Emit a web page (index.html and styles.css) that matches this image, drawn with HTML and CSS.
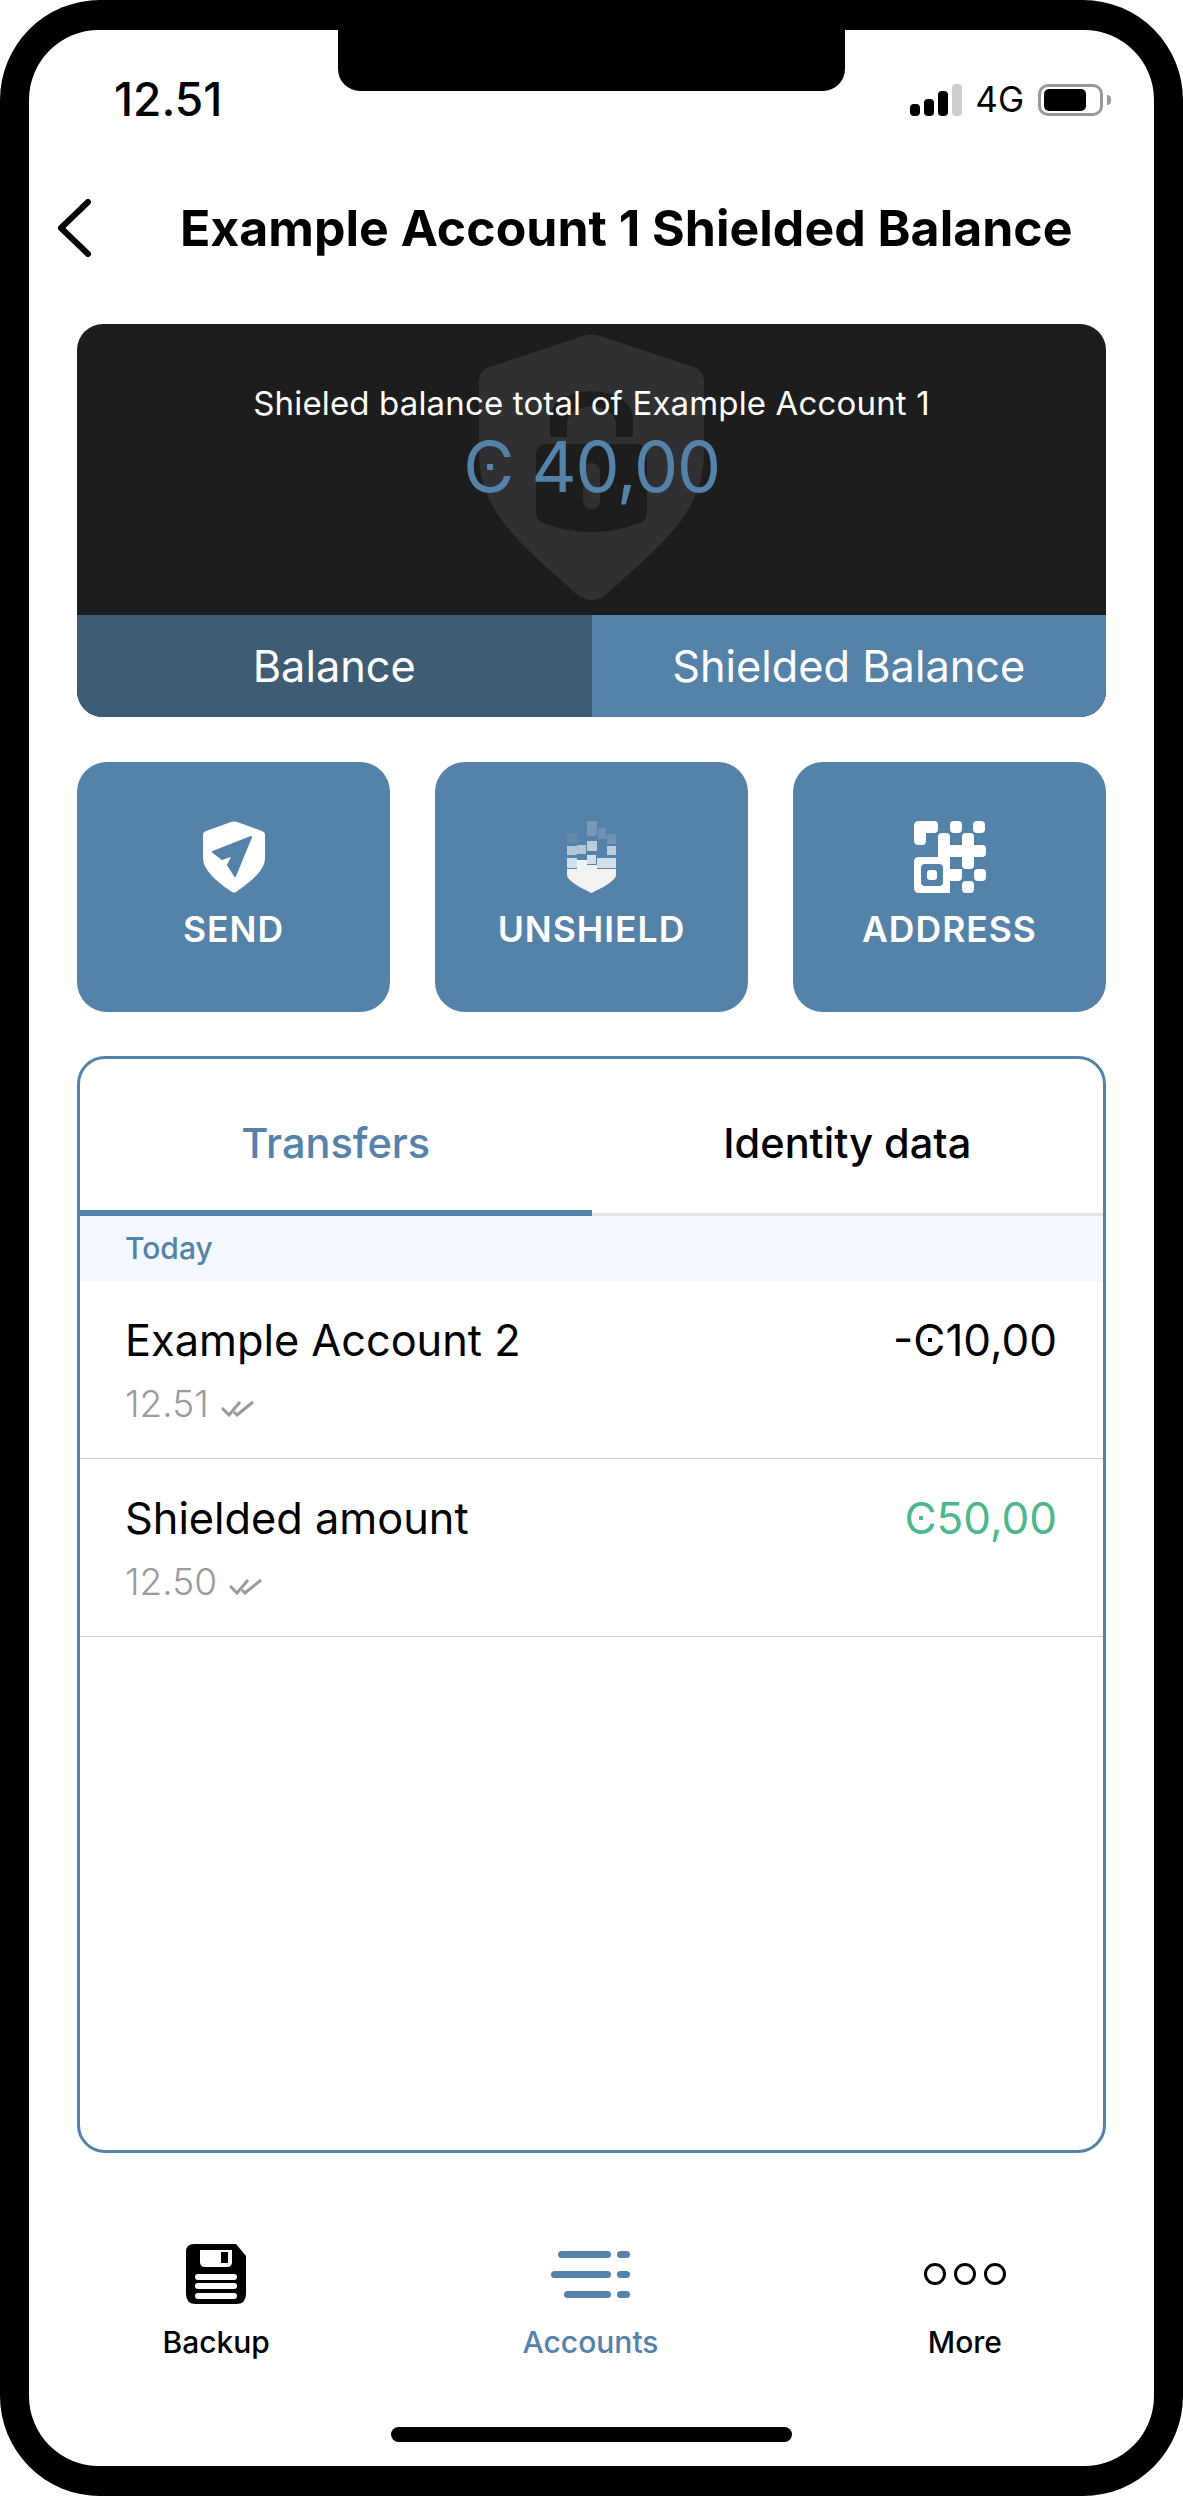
FILE: index.html

```html
<!DOCTYPE html>
<html lang="en">
<head>
  <meta charset="UTF-8" />
  <meta name="viewport" content="width=device-width, initial-scale=1.0"/>
  <title>Shielded Balance</title>
  <link rel="stylesheet" href="styles.css">
</head>
<body>
  <div class="phone">
    <div class="screen">
      <div class="notch"></div>

      <div class="status">
        <span class="clock">12.51</span>
        <div class="status-right">
          <div class="signal">
            <i class="b1"></i><i class="b2"></i><i class="b3"></i><i class="b4"></i>
          </div>
          <span class="network">4G</span>
          <div class="battery"><i></i></div>
          <div class="battery-nub"></div>
        </div>
      </div>

      <div class="nav">
        <svg class="back" width="35" height="58" viewBox="0 0 35 58">
          <path d="M31 3 L4 29 L31 55" fill="none" stroke="#000" stroke-width="6" stroke-linecap="round" stroke-linejoin="round"/>
        </svg>
        <h1>Example Account 1 Shielded Balance</h1>
      </div>

      <div class="content">
        <div class="balance-card">
          <div class="balance-top">
            <svg class="watermark" width="225" height="267" viewBox="0 0 225 267">
              <path d="M104 2 Q112.500 -1 121 2 L215 33 Q225 37 225 47 L225 118 C225 175 190 205 125 262 Q112.500 270 100 262 C35 205 0 175 0 118 L0 47 Q0 37 10 33 Z" fill="#303032"/>
              <path d="M71 103 V85 C71 48 154 48 154 85 V103 H137 V90 C137 67 88 67 88 90 V103 Z" fill="#1d1d1d"/>
              <path d="M57 122 Q57 110 69 110 H156 Q168 110 168 122 V178 Q168 188 158 190 Q112.500 206 67 190 Q57 188 57 178 Z" fill="#1d1d1d"/>
              <rect x="104" y="129" width="17" height="46" rx="8.500" fill="#303032"/>
            </svg>
            <p class="balance-label">Shieled balance total of Example Account 1</p>
            <p class="balance-amount"><span class="ccd">C</span> 40,00</p>
          </div>
          <div class="balance-tabs">
            <div class="balance-tab dim">Balance</div>
            <div class="balance-tab">Shielded Balance</div>
          </div>
        </div>

        <div class="actions">
          <div class="action">
            <svg width="62" height="72" viewBox="0 0 62 72">
              <path d="M28 1 Q31 0 34 1 L59 10 Q62 11 62 14 L62 37 C62 50 46 62 33 71 Q31 72 29 71 C16 62 0 50 0 37 L0 14 Q0 11 3 10 Z" fill="#fff"/>
              <path d="M48 16 L10 31 L19 38 L30 34 L25 44 L32 55 Z" fill="#5482a8" stroke="#5482a8" stroke-width="2" stroke-linejoin="round"/>
            </svg>
            <span>SEND</span>
          </div>
          <div class="action">
            <svg width="49" height="72" viewBox="0 0 49 72" fill="#fff">
              <rect x="20" y="0" width="10" height="15" rx="2" opacity=".2"/>
              <rect x="31" y="7" width="8" height="11" opacity=".15"/>
              <rect x="40" y="13" width="9" height="10" opacity=".15"/>
              <rect x="0" y="12" width="10" height="10" opacity=".08"/>
              <rect x="0" y="25" width="10" height="9" opacity=".55"/>
              <rect x="10" y="24" width="9" height="9" opacity=".55"/>
              <rect x="20" y="20" width="10" height="10" opacity=".6"/>
              <rect x="40" y="25" width="9" height="9" opacity=".6"/>
              <rect x="0" y="37" width="10" height="10" opacity=".75"/>
              <rect x="20" y="34" width="9" height="9" opacity=".75"/>
              <rect x="30" y="37" width="19" height="10" opacity=".75"/>
              <path d="M0 48 H10 V39 H20 V44 H30 V48 H49 V54 C49 60 33 68 24.500 72 C16 68 0 60 0 54 Z" fill="#f2f2f2"/>
            </svg>
            <span>UNSHIELD</span>
          </div>
          <div class="action">
            <svg width="72" height="72" viewBox="0 0 72 72" fill="#fff">
              <path d="M5 0 H20 Q24 0 24 4 V8 Q24 12 20 12 H12 V20 Q12 24 8 24 H5 Q0 24 0 20 V5 Q0 0 5 0 Z"/>
              <rect x="36" y="0" width="12" height="12" rx="4"/>
              <rect x="59" y="0" width="12" height="12" rx="4"/>
              <path d="M24 16 Q24 12 28 12 H32 Q36 12 36 16 V24 H48 V16 Q48 12 52 12 H56 Q60 12 60 16 V24 H68 Q72 24 72 28 V32 Q72 36 68 36 H60 V44 Q60 48 56 48 H52 Q48 48 48 44 V36 H36 V48 H48 V56 Q48 60 44 60 H36 V72 H5 Q0 72 0 67 V41 Q0 36 5 36 H24 Z"/>
              <rect x="7" y="43" width="22" height="22" rx="4" fill="#5482a8"/>
              <rect x="13" y="49" width="10" height="10" rx="3"/>
              <rect x="60" y="48" width="12" height="12" rx="4"/>
              <rect x="48" y="60" width="12" height="12" rx="4"/>
            </svg>
            <span>ADDRESS</span>
          </div>
        </div>

        <div class="panel">
          <div class="panel-tabs">
            <div class="panel-tab active">Transfers</div>
            <div class="panel-tab">Identity data</div>
          </div>
          <div class="day">Today</div>
          <div class="row">
            <div>
              <div class="row-title">Example Account 2</div>
              <div class="row-time">12.51
                <svg width="33" height="18" viewBox="0 0 33 18"><path d="M1 9 L8 16 L19 3 M13 13 L16 16 L32 3" fill="none" stroke="#9a9a9a" stroke-width="3"/></svg>
              </div>
            </div>
            <div class="row-amount"><span class="minus">-</span><span class="ccd">C</span>10,00</div>
          </div>
          <div class="row">
            <div>
              <div class="row-title">Shielded amount</div>
              <div class="row-time">12.50
                <svg width="33" height="18" viewBox="0 0 33 18"><path d="M1 9 L8 16 L19 3 M13 13 L16 16 L32 3" fill="none" stroke="#9a9a9a" stroke-width="3"/></svg>
              </div>
            </div>
            <div class="row-amount green"><span class="ccd">C</span>50,00</div>
          </div>
        </div>
      </div>

      <div class="tabbar">
        <div class="tabbar-item">
          <div class="tabbar-icon">
            <svg width="60" height="60" viewBox="0 0 60 60">
              <path d="M8 0 H50 L60 12 V50 Q60 60 50 60 H10 Q0 60 0 50 V8 Q0 0 8 0 Z"/>
              <path d="M14 6 H46 V18 Q46 23 41 23 H19 Q14 23 14 18 Z" fill="#fff"/>
              <rect x="35" y="8" width="7" height="11"/>
              <rect x="9" y="30" width="42" height="6" rx="3" fill="#fff"/>
              <rect x="9" y="39" width="42" height="6" rx="3" fill="#fff"/>
              <rect x="9" y="49" width="42" height="6" rx="3" fill="#fff"/>
            </svg>
          </div>
          <span>Backup</span>
        </div>
        <div class="tabbar-item active">
          <div class="tabbar-icon">
            <svg width="79" height="47" viewBox="0 0 79 47" fill="#5482a8">
              <rect x="7" y="0" width="53" height="7" rx="3.500"/>
              <rect x="66" y="0" width="13" height="7" rx="3.500"/>
              <rect x="0" y="20" width="60" height="7" rx="3.500"/>
              <rect x="66" y="20" width="13" height="7" rx="3.500"/>
              <rect x="13" y="40" width="47" height="7" rx="3.500"/>
              <rect x="66" y="40" width="13" height="7" rx="3.500"/>
            </svg>
          </div>
          <span>Accounts</span>
        </div>
        <div class="tabbar-item">
          <div class="tabbar-icon">
            <svg width="82" height="24" viewBox="0 0 82 24" fill="none" stroke="#000" stroke-width="3">
              <circle cx="11" cy="12" r="9.500"/>
              <circle cx="41" cy="12" r="9.500"/>
              <circle cx="71" cy="12" r="9.500"/>
            </svg>
          </div>
          <span>More</span>
        </div>
      </div>

      <div class="home-indicator"></div>
    </div>
  </div>
</body>
</html>
```

FILE: styles.css

```css
* {
  box-sizing: border-box;
}
body {
  margin: 0;
  background: #fff;
  font-family: Inter, "Liberation Sans", sans-serif;
  color: #000;
}
.phone {
  width: 1183px;
  height: 2496px;
  padding: 30px 29px;
  background: #000;
  border-radius: 100px;
}
.screen {
  position: relative;
  height: 100%;
  background: #fff;
  border-radius: 70px;
  display: flex;
  flex-direction: column;
}
.notch {
  position: absolute;
  top: 0;
  left: 309px;
  width: 507px;
  height: 61px;
  background: #000;
  border-radius: 0 0 22px 22px;
}

/* status bar */
.status {
  height: 146px;
  padding: 46px 43px 0 85px;
  display: flex;
  justify-content: space-between;
  align-items: flex-start;
}
.clock {
  font-size: 46px;
  line-height: 46px;
  font-weight: 500;
}
.status-right {
  display: flex;
  align-items: center;
  height: 39px;
  margin-top: 4px;
}
.signal {
  display: flex;
  align-items: flex-end;
  gap: 4px;
  height: 32px;
  margin-right: 13px;
}
.signal i {
  display: block;
  width: 10px;
  background: #000;
  border-radius: 4px;
}
.signal .b1 { height: 12px; }
.signal .b2 { height: 17px; }
.signal .b3 { height: 25px; }
.signal .b4 { height: 32px; background: #ccc; }
.network {
  font-size: 35px;
  line-height: 39px;
  margin-right: 14px;
}
.battery {
  width: 65px;
  height: 32px;
  border: 3px solid #999;
  border-radius: 10px;
  padding: 2px 3px;
}
.battery i {
  display: block;
  width: 42px;
  height: 22px;
  background: #000;
  border-radius: 5px;
}
.battery-nub {
  width: 4px;
  height: 10px;
  margin-left: 4px;
  background: #999;
  border-radius: 0 4px 4px 0;
}

/* header */
.nav {
  height: 104px;
  padding-left: 28px;
  display: flex;
  align-items: center;
}
.nav h1 {
  margin: 0 0 0 88px;
  font-size: 50px;
  font-weight: 700;
  white-space: nowrap;
}
.content {
  flex: 1;
  display: flex;
  flex-direction: column;
  padding: 44px 48px 0;
  min-height: 0;
}

/* balance */
.balance-card {
  height: 393px;
  border-radius: 26px;
  overflow: hidden;
  background: #1d1d1d;
  display: flex;
  flex-direction: column;
}
.balance-top {
  position: relative;
  flex: 1;
  text-align: center;
  padding-top: 59px;
}
.watermark {
  position: absolute;
  top: 10px;
  left: 402px;
}
.balance-label {
  position: relative;
  margin: 0;
  color: #fff;
  font-size: 33px;
  line-height: 40px;
  letter-spacing: .15px;
}
.balance-amount {
  position: relative;
  margin: 0;
  color: #5482a8;
  font-size: 70px;
  line-height: 88px;
  font-weight: 400;
  letter-spacing: -1.200px;
}
.ccd {
  position: relative;
}
.ccd::after {
  content: "";
  position: absolute;
  left: 47%;
  top: 50%;
  width: .09em;
  height: .09em;
  margin-top: -.04em;
  background: currentColor;
}
.balance-tabs {
  height: 102px;
  display: grid;
  grid-template-columns: 1fr 1fr;
}
.balance-tab {
  display: flex;
  align-items: center;
  justify-content: center;
  background: #5482a8;
  color: #fff;
  font-size: 43.300px;
}
.balance-tab.dim {
  background: #3e5c73;
}

/* actions */
.actions {
  display: grid;
  grid-template-columns: repeat(3, 1fr);
  gap: 45px;
  margin-top: 45px;
}
.action {
  height: 250px;
  padding-top: 59px;
  background: #5482a8;
  border-radius: 30px;
  color: #fff;
  display: flex;
  flex-direction: column;
  align-items: center;
}
.action span {
  margin-top: 17px;
  font-size: 35.500px;
  line-height: 40px;
  font-weight: 600;
  letter-spacing: 1px;
}

/* transfers */
.panel {
  flex: 1;
  margin-top: 44px;
  border: 3px solid #5482a8;
  border-radius: 28px;
  overflow: hidden;
}
.panel-tabs {
  display: grid;
  grid-template-columns: 1fr 1fr;
  height: 157px;
}
.panel-tab {
  display: flex;
  align-items: center;
  justify-content: center;
  padding-top: 13px;
  font-size: 41.500px;
  font-weight: 500;
  border-bottom: 3px solid #e2e4e6;
}
.panel-tab.active {
  color: #5482a8;
  border-bottom-color: #5482a8;
  box-shadow: inset 0 -3px 0 #5482a8;
}
.day {
  height: 65px;
  padding-left: 45px;
  background: #f3f8fe;
  color: #5482a8;
  font-size: 30px;
  font-weight: 500;
  line-height: 65px;
}
.row {
  height: 178px;
  padding: 34px 46px 0 45px;
  border-bottom: 1px solid #ccc;
  display: flex;
  justify-content: space-between;
}
.row-title {
  font-size: 43.300px;
  line-height: 50px;
}
.row-amount {
  font-size: 44px;
  line-height: 50px;
}
.row-amount.green {
  color: #4fb78f;
}
.row-time {
  margin-top: 20px;
  color: #9a9a9a;
  font-size: 37px;
  line-height: 38px;
  font-weight: 300;
}
.row-time svg {
  margin-left: 2px;
}

/* bottom tabs */
.tabbar {
  height: 274px;
  padding: 91px 2px 0 0;
  display: grid;
  grid-template-columns: repeat(3, 1fr);
}
.tabbar-item {
  display: flex;
  flex-direction: column;
  align-items: center;
  font-size: 30px;
  font-weight: 500;
}
.tabbar-item.active {
  color: #5482a8;
}
.tabbar-icon {
  height: 60px;
  margin-bottom: 20px;
  display: flex;
  align-items: center;
}
.home-indicator {
  width: 401px;
  height: 15px;
  margin: 0 auto 24px;
  background: #000;
  border-radius: 8px;
}
```
